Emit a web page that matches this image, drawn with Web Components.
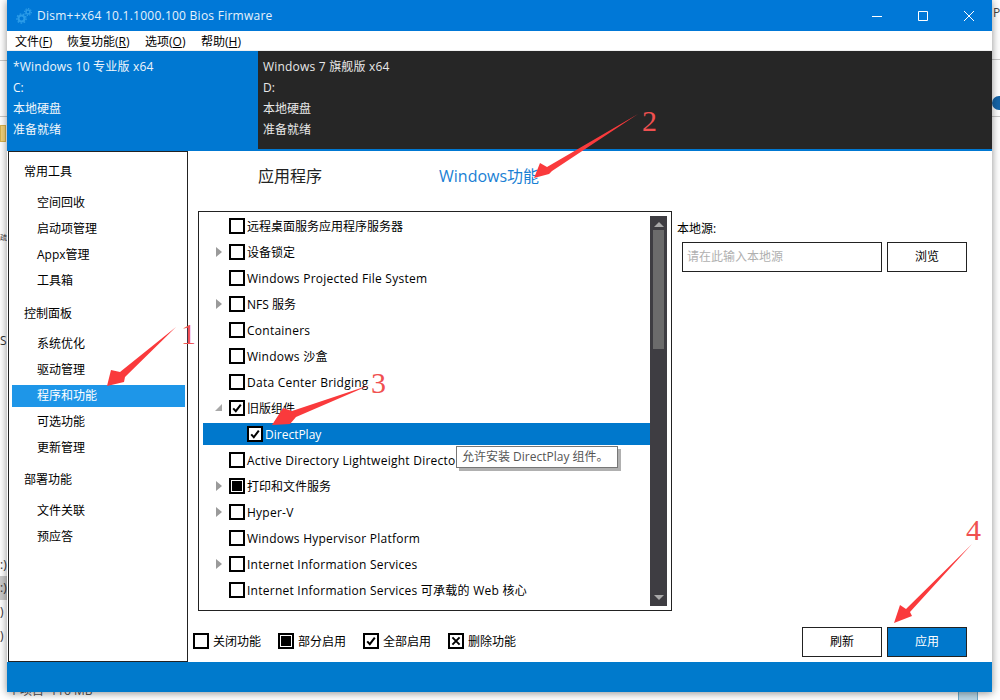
<!DOCTYPE html>
<html lang="zh">
<head>
<meta charset="utf-8">
<title>Dism++</title>
<style>
    html, body { margin: 0; height: 100%; overflow: hidden; background: #fff; }
    body { font: 12px "Open Sans", "Noto Sans CJK SC", sans-serif; color: #000; }
</style>
</head>
<body>
<desk-top>
    <app-window>
        <title-bar slot="top">Dism++x64 10.1.1000.100 Bios Firmware</title-bar>
        <menu-bar slot="top"></menu-bar>
        <os-strip slot="top">
            <os-panel active name="*Windows 10 专业版 x64" drive="C:"></os-panel>
            <os-panel name="Windows 7 旗舰版 x64" drive="D:"></os-panel>
        </os-strip>
        <side-nav slot="side">
            <nav-group label="常用工具">
                <nav-item>空间回收</nav-item>
                <nav-item>启动项管理</nav-item>
                <nav-item>Appx管理</nav-item>
                <nav-item>工具箱</nav-item>
            </nav-group>
            <nav-group label="控制面板">
                <nav-item>系统优化</nav-item>
                <nav-item>驱动管理</nav-item>
                <nav-item selected>程序和功能</nav-item>
                <nav-item>可选功能</nav-item>
                <nav-item>更新管理</nav-item>
            </nav-group>
            <nav-group label="部署功能">
                <nav-item>文件关联</nav-item>
                <nav-item>预应答</nav-item>
            </nav-group>
        </side-nav>
        <feature-page slot="main">
            <feature-tree>
                <tree-row>远程桌面服务应用程序服务器</tree-row>
                <tree-row toggle="closed">设备锁定</tree-row>
                <tree-row latin>Windows Projected File System</tree-row>
                <tree-row toggle="closed">NFS 服务</tree-row>
                <tree-row latin>Containers</tree-row>
                <tree-row latin>Windows 沙盒</tree-row>
                <tree-row latin>Data Center Bridging</tree-row>
                <tree-row toggle="open" state="all">旧版组件</tree-row>
                <tree-row child selected state="all">DirectPlay</tree-row>
                <tree-row latin>Active Directory Lightweight Directo</tree-row>
                <tree-row toggle="closed" state="part">打印和文件服务</tree-row>
                <tree-row latin toggle="closed">Hyper-V</tree-row>
                <tree-row latin>Windows Hypervisor Platform</tree-row>
                <tree-row latin toggle="closed">Internet Information Services</tree-row>
                <tree-row latin>Internet Information Services 可承载的 Web 核心</tree-row>
            </feature-tree>
        </feature-page>
    </app-window>
    <note-arrows></note-arrows>
</desk-top>

<script>
class DeskTop extends HTMLElement {
    constructor() {
        super();
        this.attachShadow({ mode: 'open' });
        this.shadowRoot.innerHTML = `
            <style>
                :host { display: block; position: relative; width: 1000px; height: 700px; overflow: hidden; background: #fff; }
                .bit { position: absolute; white-space: nowrap; color: #333; }
                .rule { position: absolute; height: 1px; background: #c8c8c8; }
                .folder { position: absolute; left: 0; top: 125px; width: 6px; height: 17px; background: #f3d27a; border: 1px solid #d8b24e; box-sizing: border-box; }
                .band { position: absolute; left: 0; top: 576px; width: 7px; height: 24px; background: #c9c9c9; }
                .help { position: absolute; left: 992px; top: 96px; width: 14px; height: 14px; border-radius: 50%; background: #1565a8; }
                .tray { position: absolute; left: 958px; top: 684px; width: 20px; height: 20px; background: #b7d6e6; border: 1px solid #6aa6c6; box-sizing: border-box; }
            </style>
            <div class="rule" style="left:0;top:60px;width:8px"></div>
            <div class="rule" style="left:0;top:116px;width:8px"></div>
            <div class="rule" style="left:992px;top:59px;width:8px"></div>
            <div class="rule" style="left:992px;top:116px;width:8px"></div>
            <div class="folder"></div>
            <div class="band"></div>
            <span class="bit" style="left:0;top:232px;font-size:7px">疏</span>
            <span class="bit" style="left:0;top:332px">S</span>
            <span class="bit" style="left:0;top:556px">:)</span>
            <span class="bit" style="left:0;top:579px">:)</span>
            <span class="bit" style="left:0;top:603px">)</span>
            <span class="bit" style="left:0;top:627px">)</span>
            <span class="bit" style="left:993px;top:4px;font-size:12px;color:#444">P</span>
            <span class="bit" style="left:8px;top:681px;color:#555">个项目 &nbsp;116 MB</span>
            <div class="help"></div>
            <div class="tray"></div>
            <slot></slot>
        `;
    }
}

class AppWindow extends HTMLElement {
    constructor() {
        super();
        this.attachShadow({ mode: 'open' });
        this.shadowRoot.innerHTML = `
            <style>
                :host {
                    position: absolute; left: 7px; top: 0; width: 985px; height: 692px;
                    display: flex; flex-direction: column; background: #fff;
                    box-shadow: 0 1px 8px rgba(0, 0, 0, .45);
                }
                .body { flex: 1; display: flex; min-height: 0; }
                .foot { height: 30px; background: #007acc; }
            </style>
            <slot name="top"></slot>
            <div class="body">
                <slot name="side"></slot>
                <slot name="main"></slot>
            </div>
            <div class="foot"></div>
        `;
    }
}

class TitleBar extends HTMLElement {
    constructor() {
        super();
        this.attachShadow({ mode: 'open' });
        this.shadowRoot.innerHTML = `
            <style>
                :host { display: flex; align-items: center; height: 31px; background: #0078d7; color: #e6f2fb; font-size: 12px; letter-spacing: .25px; }
                svg { display: block; flex: none; }
                .logo { margin: 0 5px 0 9px; }
                .text { flex: 1; padding-bottom: 1px; }
                .btn { margin-right: 36px; }
                .btn:last-child { margin-right: 18px; }
            </style>
            <svg class="logo" width="16" height="16" viewBox="0 0 16 16" fill="none" stroke="#2a9be8">
                <circle cx="5.5" cy="10.5" r="3" stroke-width="2"/>
                <circle cx="5.5" cy="10.5" r="4.6" stroke-width="1.4" stroke-dasharray="1.6 1.6"/>
                <circle cx="12" cy="4" r="2" stroke-width="1.6"/>
                <circle cx="12" cy="4" r="3.4" stroke-width="1.2" stroke-dasharray="1.3 1.3"/>
            </svg>
            <span class="text"><slot></slot></span>
            <svg class="btn" width="10" height="10" viewBox="0 0 10 10" stroke="#fff" fill="none"><path d="M0 5.5h10"/></svg>
            <svg class="btn" width="10" height="10" viewBox="0 0 10 10" stroke="#fff" fill="none"><path d="M.5.5h9v9h-9z"/></svg>
            <svg class="btn" width="10" height="10" viewBox="0 0 10 10" stroke="#fff" fill="none"><path d="M0 0l10 10M10 0L0 10"/></svg>
        `;
    }
}

class MenuBar extends HTMLElement {
    constructor() {
        super();
        this.attachShadow({ mode: 'open' });
        this.shadowRoot.innerHTML = `
            <style>
                :host { display: flex; align-items: center; height: 19px; padding-left: 8px; background: #fff; border-bottom: 1px solid #f0f0f0; font-size: 12px; color: #000; }
                span { white-space: nowrap; }
                u { text-underline-offset: 1px; }
            </style>
            <span style="width:52px">文件(<u>F</u>)</span>
            <span style="width:78px">恢复功能(<u>R</u>)</span>
            <span style="width:56px">选项(<u>O</u>)</span>
            <span>帮助(<u>H</u>)</span>
        `;
    }
}

class OsStrip extends HTMLElement {
    constructor() {
        super();
        this.attachShadow({ mode: 'open' });
        this.shadowRoot.innerHTML = `
            <style>
                :host { display: flex; height: 100px; background: #0078d2; padding-bottom: 2px; box-sizing: border-box; }
            </style>
            <slot></slot>
        `;
    }
}

class OsPanel extends HTMLElement {
    constructor() {
        super();
        this.attachShadow({ mode: 'open' });
        const active = this.hasAttribute('active');
        this.shadowRoot.innerHTML = `
            <style>
                :host {
                    display: block; box-sizing: border-box; color: #e8e8e8; font-size: 12px; line-height: 21px;
                    padding: 5px 0 0 ${active ? 6 : 5}px;
                    ${active ? 'width: 251px; color: #f0f6fb;' : 'flex: 1; background: #262626;'}
                }
                .name { letter-spacing: .2px; }
            </style>
            <div class="name">${this.getAttribute('name')}</div>
            <div>${this.getAttribute('drive')}</div>
            <div>本地硬盘</div>
            <div>准备就绪</div>
        `;
    }
}

class SideNav extends HTMLElement {
    constructor() {
        super();
        this.attachShadow({ mode: 'open' });
        this.shadowRoot.innerHTML = `
            <style>
                :host { display: block; box-sizing: border-box; width: 180px; margin-left: 1px; padding-top: 7px; border: 1px solid #222; background: #fff; }
            </style>
            <slot></slot>
        `;
    }
}

class NavGroup extends HTMLElement {
    constructor() {
        super();
        this.attachShadow({ mode: 'open' });
        this.shadowRoot.innerHTML = `
            <style>
                :host { display: block; margin-bottom: 7px; }
                :host(:last-child) { margin-top: -1px; }
                .label { height: 26px; line-height: 26px; padding-left: 15px; margin-bottom: 5px; }
                :host(:nth-child(2)) .label { margin-bottom: 4px; }
            </style>
            <div class="label">${this.getAttribute('label')}</div>
            <slot></slot>
        `;
    }
}

class NavItem extends HTMLElement {
    constructor() {
        super();
        this.attachShadow({ mode: 'open' });
        this.shadowRoot.innerHTML = `
            <style>
                :host { display: flow-root; height: 26px; }
                div { height: 22px; line-height: 22px; margin: 2px 2px 2px 3px; padding-left: 25px; }
                :host([selected]) div { background: #1e96e8; color: #fff; }
            </style>
            <div><slot></slot></div>
        `;
    }
}

class FeaturePage extends HTMLElement {
    constructor() {
        super();
        this.attachShadow({ mode: 'open' });
        this.shadowRoot.innerHTML = `
            <style>
                :host { flex: 1; display: flex; flex-direction: column; box-sizing: border-box; padding: 0 25px 5px 10px; min-width: 0; }
                .tabs { display: flex; height: 50px; margin-bottom: 10px; font-size: 16px; line-height: 50px; padding-left: 60px; }
                .tabs span:first-child { width: 181px; color: #222; }
                .tabs span:last-child { color: #1a7fd4; }
                .mid { display: flex; flex: none; }
                .source { margin-left: 5px; flex: 1; }
                .source .cap { height: 18px; line-height: 18px; margin: 9px 0 4px; }
                .line { display: flex; gap: 5px; margin-left: 5px; }
                .input { box-sizing: border-box; width: 200px; height: 30px; line-height: 28px; padding-left: 4px; border: 1px solid #222; color: #b0b0b0; }
                .bottom { display: flex; align-items: center; margin: 16px 0 0 -5px; }
                .legend { display: flex; flex: 1; margin-top: -2px; }
                .legend span { display: flex; align-items: center; width: 85px; gap: 4px; }
                .actions { display: flex; gap: 5px; }
            </style>
            <div class="tabs"><span>应用程序</span><span>Windows功能</span></div>
            <div class="mid">
                <slot></slot>
                <div class="source">
                    <div class="cap">本地源:</div>
                    <div class="line">
                        <div class="input">请在此输入本地源</div>
                        <flat-button>浏览</flat-button>
                    </div>
                </div>
            </div>
            <div class="bottom">
                <div class="legend">
                    <span><check-box></check-box>关闭功能</span>
                    <span><check-box state="part"></check-box>部分启用</span>
                    <span><check-box state="all"></check-box>全部启用</span>
                    <span><check-box state="del"></check-box>删除功能</span>
                </div>
                <div class="actions">
                    <flat-button>刷新</flat-button>
                    <flat-button primary>应用</flat-button>
                </div>
            </div>
        `;
    }
}

class FeatureTree extends HTMLElement {
    constructor() {
        super();
        this.attachShadow({ mode: 'open' });
        this.shadowRoot.innerHTML = `
            <style>
                :host { position: relative; display: flex; flex: none; box-sizing: border-box; width: 474px; height: 400px; border: 1px solid #222; padding: 1px 4px 0 4px; }
                .rows { flex: 1; min-width: 0; overflow: hidden; }
                .bar { flex: none; display: flex; flex-direction: column; align-items: center; width: 17px; height: 390px; margin-top: 3px; background: #3e3d42; }
                .thumb { width: 11px; height: 119px; background: #6b6b6b; margin-top: 3px; }
                .up, .down { width: 0; height: 0; border-left: 5px solid transparent; border-right: 5px solid transparent; }
                .up { margin-top: 6px; border-bottom: 5px solid #a8a8a8; }
                .down { margin-top: auto; margin-bottom: 6px; border-top: 5px solid #a8a8a8; }
                .tip {
                    position: absolute; left: 257px; top: 234px; width: 162px; height: 22px; box-sizing: border-box;
                    line-height: 20px; padding-left: 5px; white-space: nowrap; background: #fff; color: #555;
                    border: 1px solid #777; box-shadow: 3px 3px 0 #b0b0b0;
                }
            </style>
            <div class="rows"><slot></slot></div>
            <div class="bar"><div class="up"></div><div class="thumb"></div><div class="down"></div></div>
            <div class="tip">允许安装 DirectPlay 组件。</div>
        `;
    }
}

class TreeRow extends HTMLElement {
    constructor() {
        super();
        this.attachShadow({ mode: 'open' });
        const toggle = this.getAttribute('toggle');
        let arrow = '';
        if (toggle === 'closed') arrow = '<path d="M1 1l6 5-6 5z" fill="#9a9a9a"/>';
        if (toggle === 'open') arrow = '<path d="M7 2v7H0z" fill="#a8a8a8"/>';
        this.shadowRoot.innerHTML = `
            <style>
                :host { display: flow-root; height: 26px; }
                .in { display: flex; align-items: center; height: 22px; margin: 2px 0; padding-left: 12px; white-space: nowrap; }
                :host([selected]) .in { background: #0078cc; color: #fff; }
                :host([child]) .in { padding-left: 30px; }
                svg { flex: none; width: 14px; height: 12px; }
                .text { margin-left: 2px; }
                :host([latin]) .text { letter-spacing: .25px; }
            </style>
            <div class="in">
                <svg viewBox="0 0 14 12">${arrow}</svg>
                <check-box state="${this.getAttribute('state') || ''}"></check-box>
                <span class="text"><slot></slot></span>
            </div>
        `;
    }
}

class CheckBox extends HTMLElement {
    constructor() {
        super();
        this.attachShadow({ mode: 'open' });
        const marks = {
            all: '<path d="M2.2 6.4l2.6 2.8 5-6.6" fill="none" stroke="#000" stroke-width="2"/>',
            part: '<rect x="1" y="1" width="10" height="10" fill="#000"/>',
            del: '<path d="M2.4 2.4l7.2 7.2M9.6 2.4l-7.2 7.2" stroke="#000" stroke-width="2"/>'
        };
        this.shadowRoot.innerHTML = `
            <style>
                :host { display: block; flex: none; box-sizing: border-box; width: 16px; height: 16px; border: 2px solid #000; background: #fff; }
                svg { display: block; }
            </style>
            <svg width="12" height="12" viewBox="0 0 12 12">${marks[this.getAttribute('state')] || ''}</svg>
        `;
    }
}

class FlatButton extends HTMLElement {
    constructor() {
        super();
        this.attachShadow({ mode: 'open' });
        this.shadowRoot.innerHTML = `
            <style>
                :host { display: block; box-sizing: border-box; width: 80px; height: 30px; line-height: 28px; text-align: center; border: 1px solid #222; background: #fff; color: #000; }
                :host([primary]) { background: #0078cc; color: #fff; }
            </style>
            <slot></slot>
        `;
    }
}

// les flèches et chiffres rouges posés par-dessus la capture
class NoteArrows extends HTMLElement {
    constructor() {
        super();
        this.attachShadow({ mode: 'open' });
        this.shadowRoot.innerHTML = `
            <style>
                :host { position: absolute; inset: 0; pointer-events: none; }
                svg { position: absolute; left: 0; top: 0; }
                span { position: absolute; font: 30px/30px "Liberation Serif", serif; color: #f05050; }
            </style>
            <svg width="1000" height="700" viewBox="0 0 1000 700" fill="#fa3a3c">
                <polygon points="176,327 120,372 111,370 107,386 124,382 125,377"/>
                <polygon points="638,114 547,167 540,163 534,178 549,174 552,171"/>
                <polygon points="370,385 292,411 283,408 272,425 290,424 296,417"/>
                <polygon points="972,544 906,609 900,605 894,623 912,616 910,612"/>
            </svg>
            <span style="left:181px;top:319px">1</span>
            <span style="left:642px;top:106px">2</span>
            <span style="left:371px;top:368px">3</span>
            <span style="left:966px;top:515px">4</span>
        `;
    }
}

customElements.define('desk-top', DeskTop);
customElements.define('app-window', AppWindow);
customElements.define('title-bar', TitleBar);
customElements.define('menu-bar', MenuBar);
customElements.define('os-strip', OsStrip);
customElements.define('os-panel', OsPanel);
customElements.define('side-nav', SideNav);
customElements.define('nav-group', NavGroup);
customElements.define('nav-item', NavItem);
customElements.define('feature-page', FeaturePage);
customElements.define('feature-tree', FeatureTree);
customElements.define('tree-row', TreeRow);
customElements.define('check-box', CheckBox);
customElements.define('flat-button', FlatButton);
customElements.define('note-arrows', NoteArrows);
</script>
</body>
</html>
